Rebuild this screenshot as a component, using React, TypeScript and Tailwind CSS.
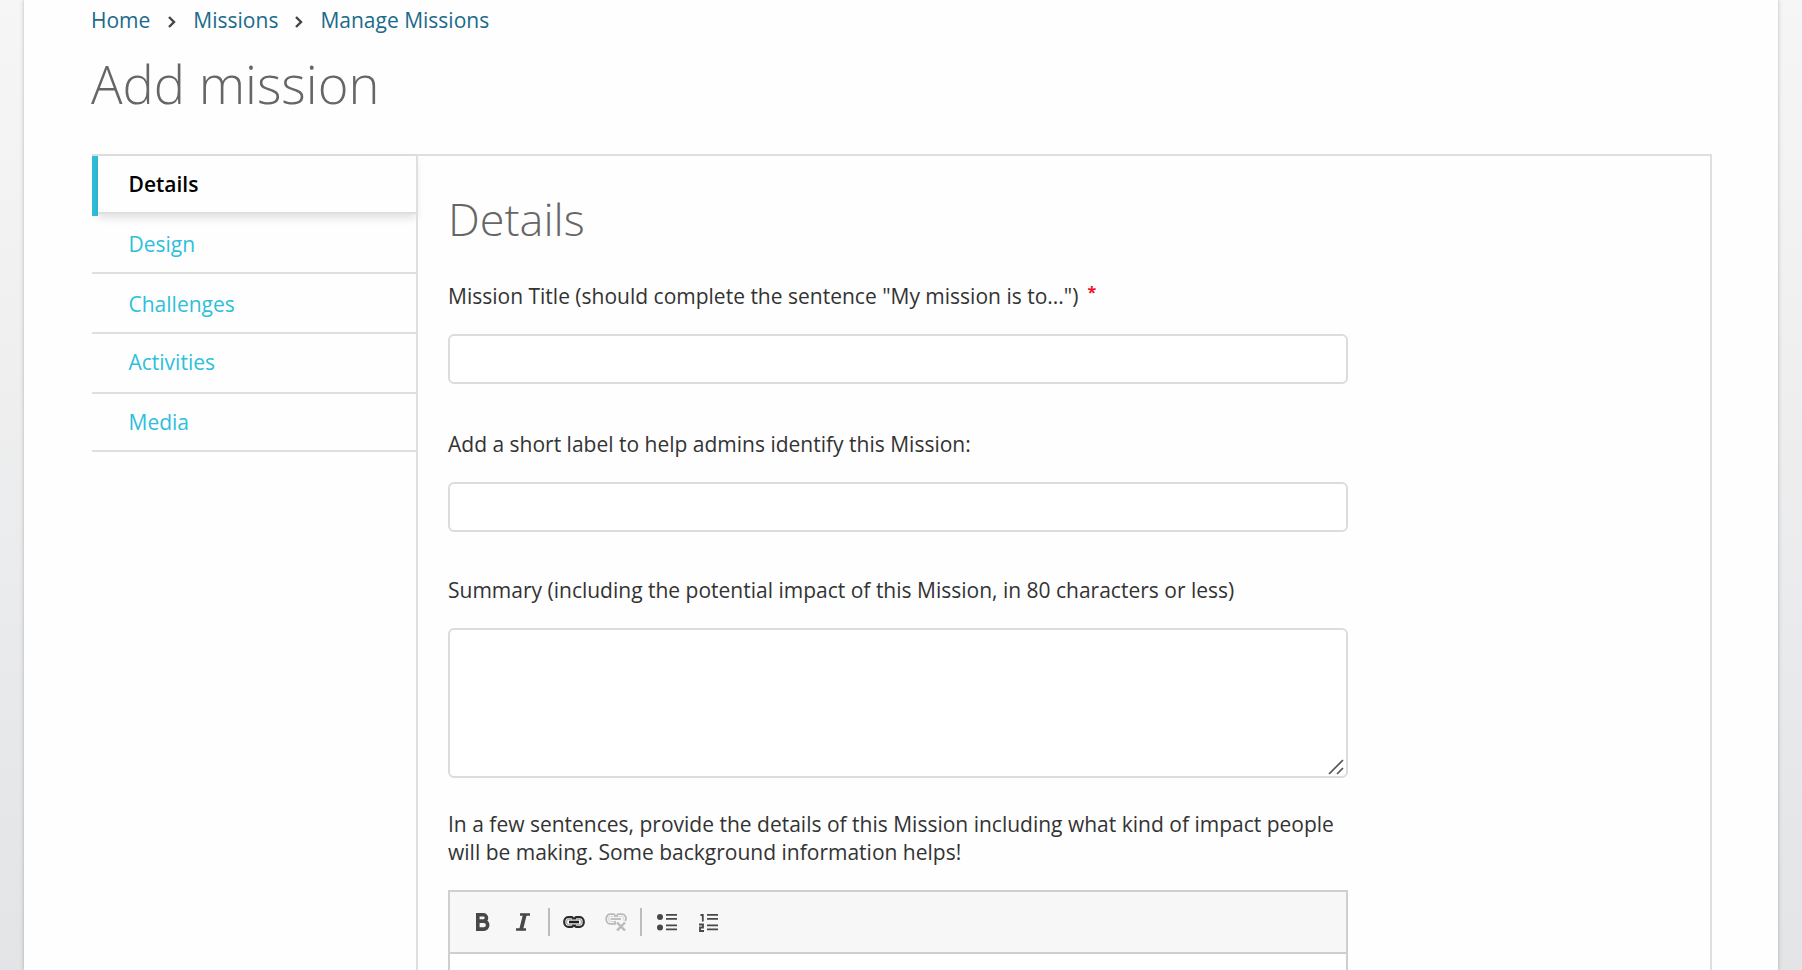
import React from "react";

const tabs = [
  { name: "Design", style: "h-[60px] leading-[60px]" },
  { name: "Challenges", style: "h-[60px] leading-[60px]" },
  { name: "Activities", style: "h-[60px] leading-[56px]" },
  { name: "Media", style: "h-[58px] leading-[56px]" },
];

function Chevron() {
  return (
    <svg className="mt-[1px] h-[12px] w-[8px]" viewBox="0 0 8 12" fill="none" stroke="#444" strokeWidth="2.4">
      <path d="M1 1l5 5-5 5" />
    </svg>
  );
}

function Divider() {
  return <span className="h-[28px] w-[2px] bg-[#bcbcbc]" />;
}

function Toolbar() {
  return (
    <div className="flex h-[62px] items-center border-b-2 border-[#cfcfcf] bg-[#f7f7f7]">
      <svg className="ml-[25px] h-[20px] w-[16px]" viewBox="0 0 16 20" fill="none" stroke="#484848" strokeWidth="3.6">
        <path d="M2.800 2.800h5.500a3 3 0 0 1 0 6.300H2.800h6a3.400 3.500 0 0 1 0 8H2.800V1" />
      </svg>
      <svg className="ml-[25px] h-[20px] w-[14px]" viewBox="0 0 14 20" fill="none" stroke="#484848">
        <path d="M4 2.500h10M0 17.500h10" strokeWidth="2.6" />
        <path d="M9 2L5 18" strokeWidth="3.8" />
      </svg>
      <span className="ml-[18px] flex"><Divider /></span>
      <svg className="ml-[13px] h-[12px] w-[22px]" viewBox="0 0 22 12" fill="none">
        <path d="M10 3.500V2.700A1.500 1.500 0 0 0 8.500 1.200H5a3.800 4.800 0 0 0 0 9.600h3.500A1.500 1.500 0 0 0 10 9.300V8.500M12 3.500V2.700A1.500 1.500 0 0 1 13.500 1.200H17a3.800 4.800 0 0 1 0 9.600h-3.500A1.500 1.500 0 0 1 12 9.300V8.500" stroke="#2b2b2b" strokeWidth="2.2" />
        <path d="M8.500 3.300H5.500a2 2.700 0 0 0 0 5.400H8.500M13.500 3.300h3a2 2.700 0 0 1 0 5.400H13.500" stroke="#999" strokeWidth="1" />
        <path d="M6 6h10" stroke="#1f1f1f" strokeWidth="2.600" />
      </svg>
      <svg className="ml-[20px] h-[18px] w-[22px]" viewBox="0 0 22 18" fill="none" stroke="#b9b9b9" strokeWidth="1.8">
        <path d="M10 4V2.700A1.500 1.500 0 0 0 8.500 1.200H5a3.800 4.800 0 0 0 0 9.600h5V8M12 4V2.700A1.500 1.500 0 0 1 13.500 1.200H17a3.800 4.300 0 0 1 3.200 6.800" />
        <path d="M8.500 3.500H5.500a2 2.500 0 0 0 0 5H9M13.500 3.500h3a2 2.300 0 0 1 1.500 4" stroke="#d6d6d6" strokeWidth="1" />
        <path d="M5.500 6h10.500" />
        <path d="M12 9.500l8 8M20 9.500l-8 8" strokeWidth="2.4" />
      </svg>
      <span className="ml-[13px] flex"><Divider /></span>
      <svg className="ml-[15px] h-[20px] w-[20px]" viewBox="0 0 20 20" fill="#484848">
        <circle cx="3" cy="5" r="3" /><circle cx="3" cy="15.500" r="3" />
        <path d="M9 2h11v1.700H9zM9 6h11v1.700H9zM9 12.500h11v1.700H9zM9 16.500h11v1.700H9z" />
      </svg>
      <svg className="ml-[22px] h-[20px] w-[19px]" viewBox="0 0 19 20" fill="#484848">
        <path d="M8 2h11v1.700H8zM8 6h11v1.700H8zM8 12.500h11v1.700H8zM8 16.500h11v1.700H8z" />
        <path d="M1.500 3h2.300V9.500M0 12.500h4v3H1v3.500h4" fill="none" stroke="#484848" strokeWidth="1.800" />
      </svg>
    </div>
  );
}

export default function App() {
  return (
    <div className="h-[970px] overflow-hidden bg-linear-to-b from-[#f6f6f6] to-[#e3e4e6] px-6 font-['Open_Sans',sans-serif] text-[21px] text-[#333]">
      <div className="h-full bg-[#fefefe] pl-[68px] pr-[66px] shadow-[0_0_4px_rgba(0,0,0,0.25)]">
        <nav className="-ml-px flex h-[40px] items-center pt-[2px] text-[#1a6a8a]">
          <a>Home</a>
          <span className="mr-[17px] ml-[18px]"><Chevron /></span>
          <a>Missions</a>
          <span className="mr-[17px] ml-[17px]"><Chevron /></span>
          <a>Manage Missions</a>
        </nav>
        <h1 className="-ml-px h-[114px] pt-[8px] text-[52.5px] leading-[72px] font-light text-[#666]">Add mission</h1>
        <div className="flex h-[900px] border-t-2 border-r-2 border-[#dfdfdf]">
          <aside className="w-[324px] shrink-0">
            <div className="flex h-[60px] border-l-[6px] border-[#2ebfdb]">
              <div className="h-[58px] flex-1 border-b-2 border-[#dfdfdf] pl-[30.5px] leading-[56px] font-semibold text-black shadow-[0_4px_8px_rgba(0,0,0,0.12)]">Details</div>
            </div>
            <div className="-mt-[2px]">
              {tabs.map((t) => (
                <div key={t.name} className={`${t.style} border-b-2 border-[#dfdfdf] pl-[36.5px] text-[#2ebfdb]`}>{t.name}</div>
              ))}
            </div>
          </aside>
          <main className="flex-1 border-l-2 border-[#dfdfdf] pl-[30px]">
            <h2 className="h-[126px] pt-[32px] text-[45px] leading-[62px] font-light text-[#666]">Details</h2>
            <label className="flex h-[52px] items-start leading-[28px]">
              Mission Title (should complete the sentence "My mission is to...")
              <span className="-mt-[4px] ml-[9px] text-[16px] leading-[28px] font-bold text-[#ee1122]">*</span>
            </label>
            <input className="block h-[50px] w-[900px] rounded-[6px] border-2 border-[#dcdcdc] bg-white" />
            <label className="mt-[46px] block h-[52px] leading-[28px]">Add a short label to help admins identify this Mission:</label>
            <input className="block h-[50px] w-[900px] rounded-[6px] border-2 border-[#dcdcdc] bg-white" />
            <label className="mt-[44px] block h-[52px] leading-[28px]">Summary (including the potential impact of this Mission, in 80 characters or less)</label>
            <div className="flex h-[150px] w-[900px] items-end justify-end rounded-[6px] border-2 border-[#dcdcdc] bg-white pr-[2px] pb-[1px]">
              <svg className="h-[16px] w-[16px]" viewBox="0 0 16 16" stroke="#555" strokeWidth="1.700">
                <path d="M1 15L15 1M9 15l6-6" />
              </svg>
            </div>
            <p className="mt-[32px] w-[900px] leading-[28px]">
              In a few sentences, provide the details of this Mission including what kind of impact people will be making. Some background information helps!
            </p>
            <div className="mt-[24px] h-[300px] w-[900px] border-2 border-[#cfcfcf] bg-white">
              <Toolbar />
            </div>
          </main>
        </div>
      </div>
    </div>
  );
}
